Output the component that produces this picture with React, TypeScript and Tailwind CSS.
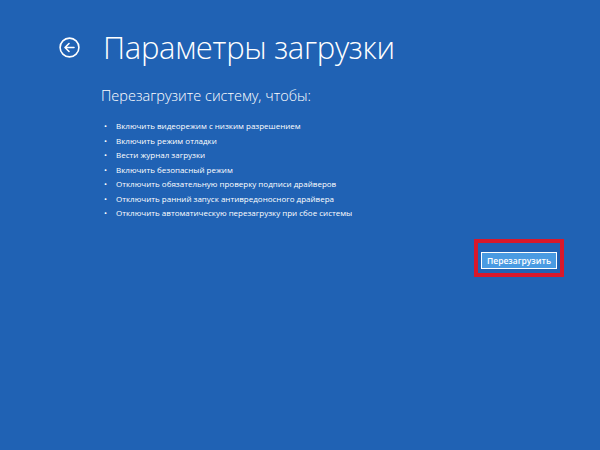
export default function App() {
  const items = [
    "Включить видеорежим с низким разрешением",
    "Включить режим отладки",
    "Вести журнал загрузки",
    "Включить безопасный режим",
    "Отключить обязательную проверку подписи драйверов",
    "Отключить ранний запуск антивредоносного драйвера",
    "Отключить автоматическую перезагрузку при сбое системы",
  ];

  return (
    <div
      className="w-[600px] h-[450px] bg-[#2062b4] text-white overflow-hidden"
      style={{ fontFamily: '"Open Sans", "Noto Sans", sans-serif' }}
    >
      <div className="flex items-center pl-[59px] pt-[29px]">
        <svg width="21" height="21" viewBox="0 0 21 21" fill="none" stroke="white" strokeWidth="1.6">
          <circle cx="10.5" cy="10.5" r="9.4" />
          <path d="M15 10.5H6.5M10 6.5l-4 4 4 4" strokeLinecap="round" strokeLinejoin="round" />
        </svg>
        <h1 className="ml-[23px] text-[31px] font-light leading-[36px] tracking-[-0.3px]">
          Параметры загрузки
        </h1>
      </div>

      <div className="pl-[101px] pt-[21px]">
        <h2 className="text-[14.5px] font-light leading-[20px]">Перезагрузите систему, чтобы:</h2>
        <ul className="mt-[13px] text-[8px] leading-[14.5px]">
          {items.map((t) => (
            <li key={t} className="flex items-center">
              <span className="w-[15px] pl-[3px] text-[8px]">•</span>
              <span>{t}</span>
            </li>
          ))}
        </ul>
      </div>

      <div className="flex justify-end pr-[36px] pt-[18px]">
        <div className="border-[4px] border-[#d8182b] p-[3px]">
          <button
            type="button"
            className="w-[76px] h-[17px] border border-white bg-[#4a9be2] text-[8.5px] font-semibold leading-none"
          >
            Перезагрузить
          </button>
        </div>
      </div>
    </div>
  );
}
